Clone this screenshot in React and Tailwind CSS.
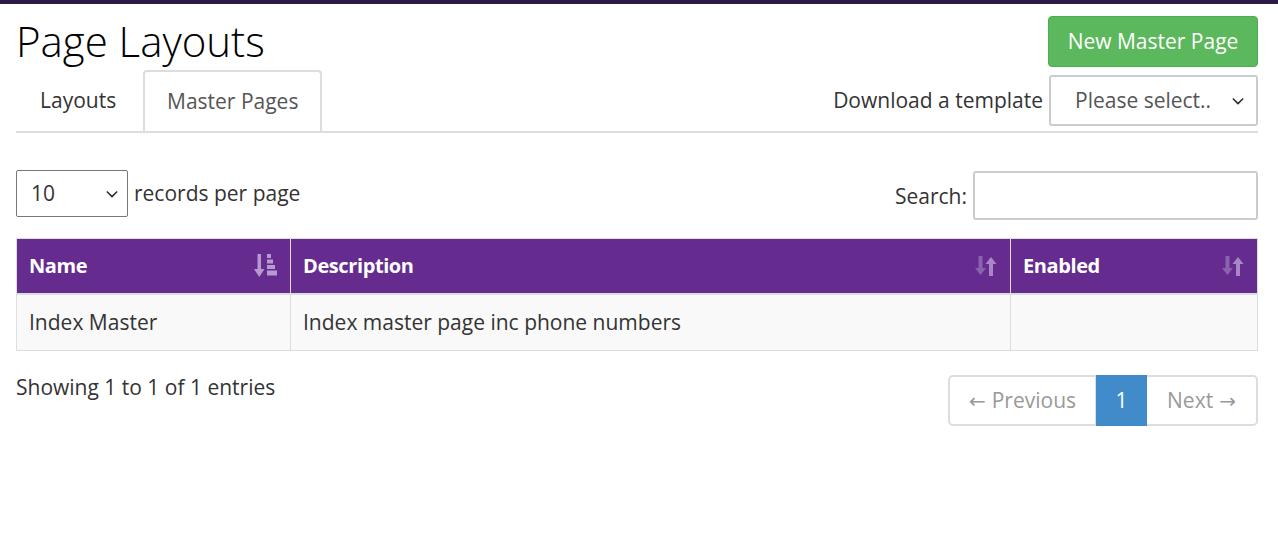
import React from "react";

const font = { fontFamily: "'Open Sans', 'Liberation Sans', sans-serif" };

// ── Icons ─────────────────────────────────────────────────────────────────
const Chevron = () => (
  <svg width="16" height="16" viewBox="0 0 24 24" fill="none" stroke="#333" strokeWidth="2.5"
    strokeLinecap="round" strokeLinejoin="round">
    <polyline points="5 9 12 16 19 9" />
  </svg>
);

const SortAsc = () => (
  <svg width="24" height="26" viewBox="0 0 24 26" fill="#b79ad0">
    <rect x="3.5" y="1" width="3.5" height="17" />
    <polygon points="0,16 10.5,16 5.25,24" />
    <rect x="13" y="1" width="4" height="4" />
    <rect x="13" y="6.5" width="6" height="4" />
    <rect x="13" y="12" width="8" height="4" />
    <rect x="13" y="17.5" width="10" height="5" />
  </svg>
);

const SortBoth = () => (
  <svg width="24" height="24" viewBox="0 0 24 24">
    <g fill="#8a62ad">
      <rect x="4.5" y="2" width="4" height="14" />
      <polygon points="1,14 12,14 6.5,21" />
    </g>
    <g fill="#a887c4">
      <rect x="15" y="8" width="4" height="14" />
      <polygon points="11.5,10 22.5,10 17,3" />
    </g>
  </svg>
);

const Arrow = ({ children }) => (
  <span className="text-[20px]" style={{ fontFamily: "'DejaVu Sans', sans-serif" }}>{children}</span>
);

function Th({ children, icon, className = "" }) {
  return (
    <th className={`text-left font-bold text-white text-[20px] px-3 h-[55px] border-r border-[#ddd] last:border-r-0 ${className}`}>
      <div className="flex items-center justify-between tracking-[-0.4px]">
        <span>{children}</span>
        {icon}
      </div>
    </th>
  );
}

export default function App() {
  return (
    <div className="min-h-screen bg-white text-[#333]" style={font}>
      <div className="h-1 bg-[#2d1a45]" />

      <div className="pl-4 pr-5">
        {/* ── Header ── */}
        <div className="flex justify-between items-start pt-3">
          <h1 className="text-[42px] font-light text-black leading-[50px]">Page Layouts</h1>
          <button className="bg-[#5cb85c] border border-[#4cae4c] text-white text-[21px] rounded-[4px] w-[210px] h-[51px]">
            New Master Page
          </button>
        </div>

        {/* ── Tabs ── */}
        <div className="flex justify-between items-end border-b-2 border-[#ddd] mt-[3px]">
          <div className="flex">
            <div className="w-[127px] pl-6 h-[61px] flex items-center text-[21px] text-[#333]">Layouts</div>
            <div className="px-[22px] h-[61px] flex items-center text-[21px] text-[#555] bg-white border-2 border-[#ddd] border-b-0 rounded-t-[4px] mb-[-2px] relative">
              Master Pages
            </div>
          </div>
          <div className="flex items-center gap-[6px] mb-[5px]">
            <span className="text-[21px]">Download a template</span>
            <div className="w-[209px] h-[51px] border-2 border-[#ccc] rounded-[3px] flex items-center justify-between pl-6 pr-[10px] text-[21px] text-[#555]">
              <span>Please select..</span>
              <Chevron />
            </div>
          </div>
        </div>

        {/* ── Controls ── */}
        <div className="flex justify-between items-start mt-[37px]">
          <div className="flex items-center gap-[6px]">
            <div className="w-[112px] h-[47px] border border-[#777] rounded-[2px] flex items-center justify-between pl-[14px] pr-[7px] text-[21px]">
              <span>10</span>
              <Chevron />
            </div>
            <span className="text-[21px]">records per page</span>
          </div>
          <div className="flex items-center gap-[6px] mt-[1px]">
            <span className="text-[21px] mt-[2px]">Search:</span>
            <div className="w-[285px] h-[49px] border-2 border-[#ccc] rounded-[3px]" />
          </div>
        </div>

        {/* ── Table ── */}
        <table className="w-full mt-[18px] border-collapse border border-[#ddd]">
          <thead className="bg-[#652b8e]">
            <tr className="border-b-2 border-[#ddd]">
              <Th className="w-[274px]" icon={<SortAsc />}>Name</Th>
              <Th className="w-[720px]" icon={<SortBoth />}>Description</Th>
              <Th icon={<SortBoth />}>Enabled</Th>
            </tr>
          </thead>
          <tbody>
            <tr className="bg-[#f9f9f9] h-[57px] text-[21px]">
              <td className="px-3 border-r border-[#ddd]">Index Master</td>
              <td className="px-3 border-r border-[#ddd]">Index master page inc phone numbers</td>
              <td className="px-3"></td>
            </tr>
          </tbody>
        </table>

        {/* ── Footer ── */}
        <div className="flex justify-between items-start mt-[24px]">
          <div className="text-[21px] mt-[-3px]">Showing 1 to 1 of 1 entries</div>
          <div className="flex h-[51px] border-2 border-[#ddd] rounded-[5px] text-[21px]">
            <div className="w-[146px] flex items-center justify-center gap-[6px] text-[#999] border-r border-[#ddd]">
              <Arrow>←</Arrow><span>Previous</span>
            </div>
            <div className="w-[51px] flex items-center justify-center bg-[#428bca] text-white my-[-2px]">1</div>
            <div className="w-[109px] flex items-center justify-center gap-[6px] text-[#999]">
              <span>Next</span><Arrow>→</Arrow>
            </div>
          </div>
        </div>
      </div>
    </div>
  );
}
